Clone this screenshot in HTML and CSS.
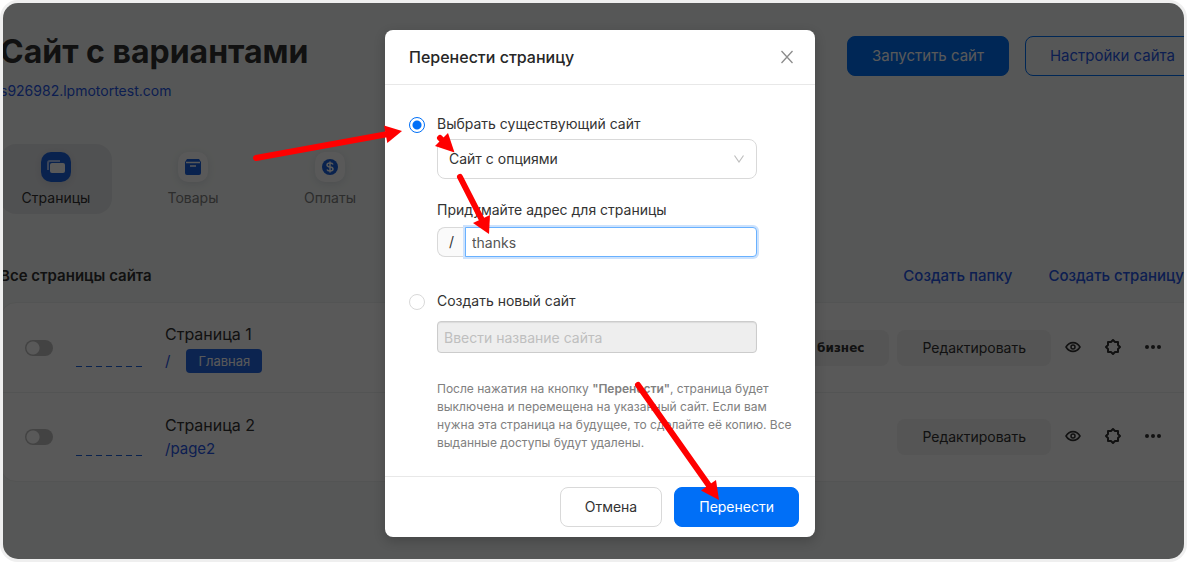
FILE: index.html
```html
<!DOCTYPE html>
<html lang="ru">
<head>
<meta charset="utf-8">
<meta name="viewport" content="width=device-width, initial-scale=1">
<title>Перенести страницу</title>
<link rel="stylesheet" href="styles.css">
</head>
<body>
<svg class="sprite" aria-hidden="true">
  <symbol id="eye" viewBox="0 0 16 16"><path d="M1 8C4.500 2.200 11.500 2.200 15 8C11.500 13.800 4.500 13.800 1 8Z" fill="none" stroke="currentColor" stroke-width="1.600" stroke-linejoin="round"/><circle cx="8" cy="8" r="2" fill="none" stroke="currentColor" stroke-width="1.500"/></symbol>
  <symbol id="gear" viewBox="0 0 16 16"><path d="M8 1L10 3H13V6L15 8L13 10V13H10L8 15L6 13H3V10L1 8L3 6V3H6Z" fill="none" stroke="currentColor" stroke-width="2" stroke-linejoin="round"/></symbol>
  <symbol id="dots" viewBox="0 0 16 16"><g fill="currentColor"><circle cx="2" cy="8" r="2"/><circle cx="8" cy="8" r="2"/><circle cx="14" cy="8" r="2"/></g></symbol>
</svg>
<div class="frame">
  <main class="page">
    <header class="top">
      <div>
        <h1 class="site-name">Сайт с вариантами</h1>
        <a class="site-link" href="#">s926982.lpmotortest.com</a>
      </div>
      <div class="top-actions">
        <button class="btn btn-primary" type="button">Запустить сайт</button>
        <button class="btn btn-outline" type="button">Настройки сайта</button>
      </div>
    </header>

    <nav class="tabs">
      <a class="tab tab-active" href="#">
        <span class="tab-icon"><svg width="30" height="30" viewBox="0 0 30 30"><path d="M7 18V11Q7 9 9 9H19" fill="none" stroke="#a9c6ff" stroke-width="2"/><rect x="9" y="11" width="15" height="10" rx="2" fill="#fff"/></svg></span>
        Страницы
      </a>
      <a class="tab" href="#">
        <span class="tab-icon"><svg width="30" height="30" viewBox="0 0 30 30"><path d="M9 7H21L23 10V21Q23 23 21 23H9Q7 23 7 21V10Z" fill="#1a63e0"/><path d="M8 10.500H22M12 14H18" stroke="#fff" stroke-width="1.500"/></svg></span>
        Товары
      </a>
      <a class="tab" href="#">
        <span class="tab-icon"><svg width="30" height="30" viewBox="0 0 30 30"><circle cx="15" cy="15" r="8" fill="#1a63e0"/><path d="M18 12.500Q17.500 11 15 11Q12 11 12 13Q12 14.700 15 15Q18 15.300 18 17Q18 19 15 19Q12.500 19 12 17.500M15 9.500V20.500" fill="none" stroke="#fff" stroke-width="1.500"/></svg></span>
        Оплаты
      </a>
    </nav>

    <section>
      <div class="list-head">
        <h2 class="list-title">Все страницы сайта</h2>
        <a class="list-link" href="#">Создать папку</a>
        <a class="list-link" href="#">Создать страницу</a>
      </div>
      <div class="list">
        <article class="row">
          <input class="switch" type="checkbox" aria-label="Включить Страница 1">
          <svg class="dash" width="66" height="2" aria-hidden="true"><path d="M0 0.500H66" stroke="#1a63e0" stroke-width="1" stroke-dasharray="6 4"/></svg>
          <div class="row-info">
            <h3 class="row-name">Страница 1</h3>
            <div class="row-url row-url-main"><a href="#">/</a><span class="badge">Главная</span></div>
          </div>
          <button class="soft soft-bold" type="button">бизнес</button>
          <button class="soft" type="button">Редактировать</button>
          <div class="icons">
            <button class="icon" type="button" aria-label="Просмотр"><svg width="16" height="16"><use href="#eye"/></svg></button>
            <button class="icon" type="button" aria-label="Настройки"><svg width="16" height="16"><use href="#gear"/></svg></button>
            <button class="icon" type="button" aria-label="Ещё"><svg width="16" height="16"><use href="#dots"/></svg></button>
          </div>
        </article>
        <article class="row">
          <input class="switch" type="checkbox" aria-label="Включить Страница 2">
          <svg class="dash" width="66" height="2" aria-hidden="true"><path d="M0 0.500H66" stroke="#1a63e0" stroke-width="1" stroke-dasharray="6 4"/></svg>
          <div class="row-info">
            <h3 class="row-name">Страница 2</h3>
            <div class="row-url"><a href="#">/page2</a></div>
          </div>
          <button class="soft" type="button">Редактировать</button>
          <div class="icons">
            <button class="icon" type="button" aria-label="Просмотр"><svg width="16" height="16"><use href="#eye"/></svg></button>
            <button class="icon" type="button" aria-label="Настройки"><svg width="16" height="16"><use href="#gear"/></svg></button>
            <button class="icon" type="button" aria-label="Ещё"><svg width="16" height="16"><use href="#dots"/></svg></button>
          </div>
        </article>
      </div>
    </section>
  </main>

  <div class="overlay">
    <form class="modal" role="dialog" aria-labelledby="modal-title">
      <header class="modal-head">
        <h2 class="modal-title" id="modal-title">Перенести страницу</h2>
        <button class="close" type="button" aria-label="Закрыть"><svg width="12" height="14" viewBox="0 0 12 14"><path d="M0.500 1L11.500 13M11.500 1L0.500 13" stroke="currentColor" stroke-width="1.300"/></svg></button>
      </header>
      <div class="modal-body">
        <input class="radio" type="radio" name="target" id="existing" checked>
        <div class="choice">
          <label class="label" for="existing">Выбрать существующий сайт</label>
          <div class="select-wrap">
            <select class="select" aria-label="Сайт"><option>Сайт с опциями</option></select>
            <svg class="chevron" width="10" height="8" viewBox="0 0 10 8"><path d="M0.500 0.500L5 7L9.500 0.500" fill="none" stroke="#bfbfbf" stroke-width="1.200"/></svg>
          </div>
          <label class="label label-address" for="address">Придумайте адрес для страницы</label>
          <div class="group">
            <span class="addon">/</span>
            <input class="address" id="address" type="text" value="thanks">
          </div>
        </div>
        <input class="radio" type="radio" name="target" id="new">
        <div class="choice">
          <label class="label" for="new">Создать новый сайт</label>
          <input class="new-name" type="text" placeholder="Ввести название сайта" aria-label="Название сайта" disabled>
          <p class="note">После нажатия на кнопку <b>"Перенести"</b>, страница будет выключена и перемещена на указанный сайт. Если вам нужна эта страница на будущее, то сделайте её копию. Все выданные доступы будут удалены.</p>
        </div>
      </div>
      <footer class="modal-foot">
        <button class="btn btn-default" type="button">Отмена</button>
        <button class="btn btn-primary" type="button">Перенести</button>
      </footer>
      <svg class="arrows" width="430" height="507" viewBox="385 30 430 507" aria-hidden="true">
        <g stroke="#f00" stroke-width="6" stroke-linecap="round"><path d="M256 158L388 134M440 138L446 144M460 177L483 222M638 385L710 487"/></g>
        <g fill="#f00"><path d="M402 131L384 125.500L387.300 143Z"/><path d="M454.500 152.500L448 133L435 146Z"/><path d="M489 234L490 215L473 223Z"/><path d="M719 500L716 480L701 490.500Z"/></g>
      </svg>
    </form>
  </div>
</div>
</body>
</html>
```
FILE: styles.css
```css
* { box-sizing: border-box; }
body {
  margin: 0;
  background: #fff;
  color: #333;
  font-family: Inter, "Liberation Sans", sans-serif;
  font-size: 14px;
  line-height: 20px;
}
h1, h2, h3, p { margin: 0; }
a { color: #2757e8; text-decoration: none; }
button, input, select { font: inherit; color: inherit; margin: 0; }
svg { display: block; }
.sprite { position: absolute; width: 0; height: 0; }

.frame {
  position: relative;
  min-height: 100vh;
  overflow: hidden;
  border: 3px solid #efefef;
  border-radius: 18px;
  background: #f6faf8;
}
.page { margin: 0 -16px 0 -3px; padding: 27px 0; }

.top { display: flex; justify-content: space-between; }
.site-name { font-size: 32px; line-height: 44px; font-weight: 700; }
.site-link { display: block; margin-top: 7px; }
.top-actions { display: flex; gap: 16px; padding-top: 6px; }
.btn {
  height: 40px;
  padding: 0 24px;
  border: 1px solid transparent;
  border-radius: 8px;
  background: #fff;
}
.btn-primary { background: #006ff7; border-color: #006ff7; color: #fff; }
.btn-outline { background: transparent; border-color: #006ff7; color: #2757e8; }
.btn-default { border-color: #d9d9d9; }
.top .btn { font-size: 15px; }

.tabs { display: flex; gap: 25px; margin-top: 43px; }
.tab {
  display: flex;
  flex-direction: column;
  align-items: center;
  gap: 6px;
  width: 112px;
  padding: 8px 0 6px;
  border-radius: 16px;
  color: #808080;
}
.tab-active { background: #e6e8eb; color: #333; }
.tab-icon { border-radius: 10px; background: #fff; box-shadow: 0 2px 8px rgba(40, 40, 90, 0.12); }
.tab-active .tab-icon { background: #1a63e0; }

.list-head { display: flex; align-items: center; gap: 36px; padding: 0 16px 0 0; margin-top: 52px; }
.list-title { margin-right: auto; font-size: 15px; font-weight: 600; }
.list-link { font-size: 15px; font-weight: 500; }
.list { margin-top: 16px; border: 1px solid #edf0ef; border-radius: 16px; background: #fff; }
.row { display: flex; align-items: center; height: 89px; padding: 0 38px 0 24px; }
.row + .row { border-top: 1px solid #edf0ef; }
.switch {
  appearance: none;
  width: 28px;
  height: 16px;
  border-radius: 8px;
  background: radial-gradient(circle at 8px 8px, #fff 6px, #bfbfbf 7px);
}
.dash { margin: 38px 23px 0; }
.row-info { margin-right: auto; }
.row-name { font-size: 16px; line-height: 24px; font-weight: 400; }
.row-url { display: flex; align-items: center; gap: 16px; font-size: 15px; line-height: 24px; }
.row-url-main { margin-top: 3px; }
.badge { padding: 0 12px; border-radius: 4px; background: #2468e5; color: #fff; font-size: 13px; }
.soft {
  height: 36px;
  margin-left: 8px;
  padding: 0 25px;
  border: 0;
  border-radius: 8px;
  background: #f2f2f2;
}
.soft-bold { font-family: "DejaVu Sans", sans-serif; font-weight: 700; font-size: 12px; }
.icons { display: flex; gap: 24px; margin-left: 14px; padding-bottom: 2px; }
.icon { padding: 0; border: 0; background: none; }

.overlay {
  position: absolute;
  inset: 0 -16px 0 -3px;
  display: flex;
  justify-content: center;
  align-items: flex-start;
  padding-top: 27px;
  background: rgba(0, 0, 0, 0.65);
}
.modal {
  position: relative;
  width: 430px;
  border-radius: 8px;
  background: #fff;
  box-shadow: 0 4px 12px rgba(0, 0, 0, 0.2);
}
.modal-head {
  display: flex;
  justify-content: space-between;
  align-items: center;
  height: 55px;
  padding: 0 22px 0 24px;
  border-bottom: 1px solid #e8e8e8;
}
.modal-title { font-size: 16px; font-weight: 500; color: #262626; }
.close { padding: 0; border: 0; background: none; color: #8c8c8c; }
.modal-body {
  display: grid;
  grid-template-columns: 16px 1fr;
  gap: 34px 12px;
  padding: 29px 24px 24px;
}
.radio {
  appearance: none;
  width: 16px;
  height: 16px;
  margin-top: 3px;
  border: 1px solid #d9d9d9;
  border-radius: 50%;
}
.radio:checked { border-color: #006ff7; background: radial-gradient(circle, #006ff7 4px, #fff 5px); }
.label { display: block; }
.select-wrap { position: relative; width: 320px; margin-top: 5px; }
.select {
  appearance: none;
  width: 100%;
  height: 40px;
  padding: 0 11px;
  border: 1px solid #d9d9d9;
  border-radius: 8px;
  background: #fff;
}
.chevron { position: absolute; right: 13px; top: 16px; pointer-events: none; }
.label-address { margin-top: 21px; }
.group { display: flex; width: 320px; margin-top: 7px; }
.addon {
  width: 28px;
  height: 30px;
  border: 1px solid #d9d9d9;
  border-right: 0;
  border-radius: 8px 0 0 8px;
  background: #fafafa;
  line-height: 28px;
  text-align: center;
}
.address {
  flex: 1;
  min-width: 0;
  height: 30px;
  padding: 0 6px;
  border: 1px solid #69b1ff;
  border-radius: 0 4px 4px 0;
  outline: 0;
  box-shadow: 0 0 0 2px #cce2fd;
  color: #555;
}
.new-name {
  width: 320px;
  height: 32px;
  margin-top: 10px;
  padding: 0 6px;
  border: 1px solid #ccc;
  border-radius: 4px;
  background: #eee;
  box-shadow: inset 0 1px 1px rgba(0, 0, 0, 0.08);
}
.new-name::placeholder { color: #bfbfbf; }
.note { margin-top: 27px; margin-right: -10px; color: #808080; font-size: 12px; line-height: 18px; }
.note b { font-weight: 600; }
.modal-foot {
  display: flex;
  justify-content: flex-end;
  gap: 12px;
  padding: 10px 16px;
  border-top: 1px solid #e8e8e8;
}
.arrows { position: absolute; inset: 0; overflow: visible; pointer-events: none; }
```
